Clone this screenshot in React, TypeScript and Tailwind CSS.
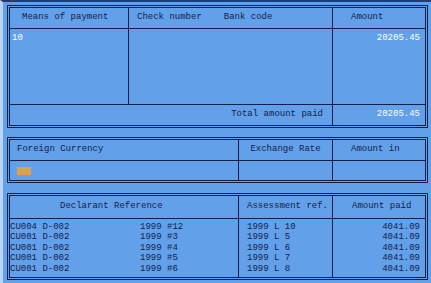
const box = "border-[3px] border-double border-[#14204a]";
const cell = "flex items-center";

const rows = [
    { ref: "CU004 D-002", year: "1999 #12", assess: "1999 L 10", amount: "4041.09" },
    { ref: "CU001 D-002", year: "1999 #3", assess: "1999 L 5", amount: "4041.09" },
    { ref: "CU001 D-002", year: "1999 #4", assess: "1999 L 6", amount: "4041.09" },
    { ref: "CU001 D-002", year: "1999 #5", assess: "1999 L 7", amount: "4041.09" },
    { ref: "CU001 D-002", year: "1999 #6", assess: "1999 L 8", amount: "4041.09" },
];

export default function App() {
    return (
        <div className="w-[431px] h-[283px] overflow-hidden bg-[#62a0ea] border-t-2 border-t-[#2a3a66] border-l-[3px] border-l-[#b8d4f6] font-['Liberation_Mono',monospace] text-[9px] text-[#14204a] flex flex-col">

            {/* payment */}
            <div className={`${box} ml-[4px] mr-[3px] mt-[3px] flex flex-col`}>
                <div className="flex h-[21px] border-b border-[#14204a]">
                    <div className={`${cell} w-[119px] border-r border-[#14204a] pl-[12px]`}>Means of payment</div>
                    <div className={`${cell} w-[204px] border-r border-[#14204a] pl-[8px] gap-[22px]`}>
                        <span>Check number</span>
                        <span>Bank code</span>
                    </div>
                    <div className={`${cell} flex-1 pl-[18px]`}>Amount</div>
                </div>
                <div className="flex h-[76px] border-b border-[#14204a]">
                    <div className="w-[119px] border-r border-[#14204a] pl-[2px] pt-[3px] text-white">10</div>
                    <div className="w-[204px] border-r border-[#14204a]"></div>
                    <div className="flex-1 text-right pr-[5px] pt-[3px] text-white">20205.45</div>
                </div>
                <div className="flex h-[20px]">
                    <div className={`${cell} w-[323px] border-r border-[#14204a] justify-end pr-[9px]`}>Total amount paid</div>
                    <div className={`${cell} flex-1 justify-end pr-[5px] text-white`}>20205.45</div>
                </div>
            </div>

            {/* currency */}
            <div className={`${box} ml-[4px] mr-[3px] mt-[9px] flex flex-col`}>
                <div className="flex h-[21px] border-b border-[#14204a]">
                    <div className={`${cell} w-[229px] border-r border-[#14204a] pl-[7px]`}>Foreign Currency</div>
                    <div className={`${cell} w-[94px] border-r border-[#14204a] justify-center`}>Exchange Rate</div>
                    <div className={`${cell} flex-1 pl-[18px]`}>Amount in</div>
                </div>
                <div className="flex h-[19px]">
                    <div className={`${cell} w-[229px] border-r border-[#14204a] pl-[7px]`}>
                        <div className="w-[14px] h-[8px] bg-[#dca24a]"></div>
                    </div>
                    <div className="w-[94px] border-r border-[#14204a]"></div>
                    <div className="flex-1"></div>
                </div>
            </div>

            {/* declarations */}
            <div className={`${box} ml-[4px] mr-[3px] mt-[10px] flex flex-col`}>
                <div className="flex h-[23px] border-b border-[#14204a]">
                    <div className={`${cell} w-[229px] border-r border-[#14204a] pl-[50px]`}>Declarant Reference</div>
                    <div className={`${cell} w-[94px] border-r border-[#14204a] pl-[8px]`}>Assessment ref.</div>
                    <div className={`${cell} flex-1 pl-[19px]`}>Amount paid</div>
                </div>
                <div className="flex h-[58px] leading-[10.4px]">
                    <div className="w-[229px] border-r border-[#14204a] pt-[3px]">
                        {rows.map((r, i) => (
                            <div key={i} className="flex">
                                <span className="w-[130px]">{r.ref}</span>
                                <span>{r.year}</span>
                            </div>
                        ))}
                    </div>
                    <div className="w-[94px] border-r border-[#14204a] pl-[8px] pt-[3px]">
                        {rows.map((r, i) => (
                            <div key={i}>{r.assess}</div>
                        ))}
                    </div>
                    <div className="flex-1 text-right pr-[5px] pt-[3px]">
                        {rows.map((r, i) => (
                            <div key={i}>{r.amount}</div>
                        ))}
                    </div>
                </div>
            </div>
        </div>
    );
}
